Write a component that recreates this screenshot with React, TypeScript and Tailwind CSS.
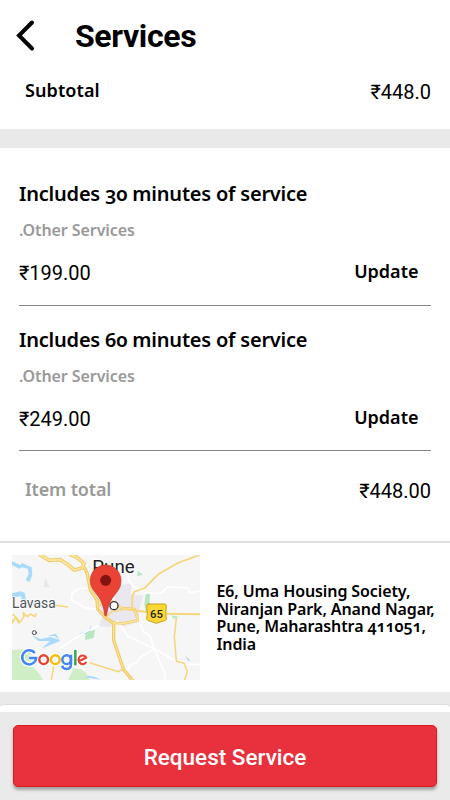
import React from 'react';

interface ServiceItem {
  id: number;
  title: string;
  category: string;
  price: string;
}

const ITEMS: ServiceItem[] = [
  { id: 1, title: 'Includes 30 minutes of service', category: '.Other Services', price: '₹199.00' },
  { id: 2, title: 'Includes 60 minutes of service', category: '.Other Services', price: '₹249.00' },
];

const ADDRESS = ['E6, Uma Housing Society,', 'Niranjan Park, Anand Nagar,', 'Pune, Maharashtra 411051,', 'India'];

const LocationMap: React.FC = () => (
  <svg
    viewBox="37 45 564 375"
    className="h-[125px] w-[188px] shrink-0 [font-feature-settings:normal]"
    fill="none"
    strokeLinecap="round"
    strokeLinejoin="round"
  >
    <rect x="37" y="45" width="564" height="375" fill="#f6f6f6" />

    {/* parks */}
    <g fill="#cfeec5">
      <path d="M37 330 L75 328 L105 350 L95 375 L118 400 L130 420 L37 420Z" />
      <path d="M205 420 L222 385 L245 388 L262 402 L270 420Z" />
      <path d="M258 277 L286 270 L282 293 L256 301Z" fill="#b9e6c1" />
      <path d="M438 163 L451 158 L450 190 L462 210 L440 218 L434 192Z" fill="#b9e6c1" />
      <path d="M414 92 L430 104 L413 109Z" fill="#b9e6c1" />
      <path d="M515 226 L540 231 L522 236Z" fill="#b9e6c1" />
    </g>
    <path d="M137 112 L150 143 L132 140Z" fill="#e8e8e8" />

    {/* city area */}
    <path d="M345 137 L397 130 L393 162 L430 168 L420 205 L416 245 L372 260 L355 245 L330 262 L297 258 L308 230 L300 190 L345 188Z" fill="#ebe7ef" />

    {/* water */}
    <g fill="#a9dafb">
      <path d="M37 64 L62 75 L67 69 L96 82 L98 103 L90 126 L78 121 L87 101 L84 86 L68 82 L58 86 L37 75Z" />
      <path d="M37 160 L62 154 L75 158 L79 179 L92 186 L104 181 L107 196 L91 190 L68 185 L64 168 L37 174Z" />
      <path d="M98 287 L123 297 L153 291 L180 300 L165 288 L143 288 L169 281 L181 303 L152 315 L127 325 L151 303 L116 303Z" />
      <path d="M237 283 L266 270 L275 256 L272 272 L257 282Z" />
      <path d="M254 413 L268 407 L287 411 L304 419 L270 414Z" />
      <path d="M556 348 L571 359 L567 364Z" />
    </g>

    {/* minor roads */}
    <g stroke="#ffffff" strokeWidth="5">
      <path d="M216 180 Q212 153 231 151 Q254 137 270 151 L282 170" />
      <path d="M216 180 Q235 190 254 203 L300 210" />
      <path d="M297 257 L260 274 L216 302 L180 325" />
      <path d="M402 140 Q444 168 487 158 L504 140 L565 144 L570 158 L600 153" />
      <path d="M402 142 L385 118 L390 80" />
      <path d="M353 243 L384 288 L464 326 L530 364 L556 374 L600 373" />
      <path d="M416 240 L432 276 L449 286 L464 326 L497 405 L494 420" />
      <path d="M464 326 L424 350 L410 369 L391 375 L378 400" />
    </g>

    {/* highways, casing then fill */}
    <g stroke="#efcb6a" strokeWidth="8">
      <path d="M122 45 L148 61 L181 59 L202 72 L224 90 L248 84 L253 70 L230 51 L214 45" strokeWidth="11" />
      <path d="M252 80 L262 98 L272 150 L292 180 L294 207 L318 234 L342 249 L342 300 L357 345 L372 389 L398 420" strokeWidth="10" />
      <path d="M342 249 L372 250 L415 241 L405 207 L365 204 L340 185" />
    </g>
    <g stroke="#ffe8a2" strokeWidth="3.5">
      <path d="M122 45 L148 61 L181 59 L202 72 L224 90 L248 84 L253 70 L230 51 L214 45" strokeWidth="5" />
      <path d="M252 80 L262 98 L272 150 L292 180 L294 207 L318 234 L342 249 L342 300 L357 345 L372 389 L398 420" strokeWidth="3" />
      <path d="M342 249 L372 250 L415 241 L405 207 L365 204 L340 185" />
    </g>
    <g stroke="#f5d67a" strokeWidth="4.5">
      <path d="M292 206 L306 190 L320 188 M292 180 L310 190 M318 234 L335 215 L375 208" />
      <path d="M380 208 L442 216 M500 221 L600 223" strokeWidth="6" />
      <path d="M397 207 L398 170 L404 155 L434 145 L478 101 L536 68 L600 45" strokeWidth="5" />
      <path d="M530 235 L524 290 L530 364 L553 370 L563 394 L555 420" />
      <path d="M272 369 L357 395 L372 384" />
      <path d="M162 378 L155 420" />
      <path d="M167 196 L203 201" />
      <path d="M37 245 L50 232 L40 224 M50 232 L61 247 L73 230 L70 218 L83 230 L92 222 L106 230 L109 221" />
      <path d="M37 250 L48 232 L58 249" />
    </g>

    {/* place labels */}
    <g fontFamily="Roboto, sans-serif" stroke="#ffffff" paintOrder="stroke">
      <text x="278" y="100" fontSize="56" fill="#222222" strokeWidth="5" textLength="127" lengthAdjust="spacingAndGlyphs">Pune</text>
      <text x="37" y="203" fontSize="42" fill="#4f5358" strokeWidth="5" textLength="131" lengthAdjust="spacingAndGlyphs">Lavasa</text>
    </g>
    <circle cx="104" cy="278" r="6" fill="#ffffff" stroke="#444444" strokeWidth="3" />
    <circle cx="343" cy="197" r="12" fill="#ffffff" stroke="#333333" strokeWidth="4" />

    {/* route shield */}
    <path d="M447 192 H494 Q500 192 500 198 L498 221 L500 238 Q498 242 488 244 L470 250 L453 244 Q442 242 441 238 L443 221 L441 198 Q441 192 447 192Z" fill="#fdd835" stroke="#c89f1c" strokeWidth="3" />
    <text x="470.500" y="234" fontFamily="Roboto, sans-serif" fontSize="34" fontWeight="500" fill="#222222" textAnchor="middle">65</text>

    {/* pin */}
    <path d="M318 75 C292 75 272 96 272 121 C272 151 294 160 305 185 C311 199 314 213 315 226 Q318 231 321 226 C323 207 327 191 338 174 C350 157 364 147 364 121 C364 96 344 75 318 75Z" fill="#ea4335" stroke="#c5392c" strokeWidth="2" />
    <circle cx="318" cy="121" r="16.500" fill="#811411" />

    {/* Google wordmark */}
    <g strokeLinecap="butt">
      {['halo', 'color'].map((layer) => {
        const halo = layer === 'halo';
        const c = (value: string) => (halo ? '#ffffff' : value);
        const w = halo ? 15 : 7.5;
        return (
          <g key={layer} strokeWidth={w}>
            <path d="M105 339 A21 21 0 1 0 109.500 354 H88" stroke={c('#4285f4')} strokeLinejoin="miter" />
            <circle cx="132" cy="359" r="13" stroke={c('#ea4335')} />
            <circle cx="167" cy="359" r="13" stroke={c('#fbbc05')} />
            <circle cx="201" cy="359" r="13" stroke={c('#4285f4')} />
            <path d="M214 344 V372 Q214 387 201 387 Q191 387 187 377" stroke={c('#4285f4')} />
            <path d="M227 330 V376" stroke={c('#34a853')} />
            <path d="M238 363 L260 353 A12.500 13 0 1 0 260 366" stroke={c('#ea4335')} strokeWidth={halo ? 14 : 6.5} />
          </g>
        );
      })}
    </g>
  </svg>
);

const Price: React.FC<{ value: string }> = ({ value }) => (
  <span className="font-[Roboto] text-[20px] leading-[28px] [font-feature-settings:normal]">{value}</span>
);

const ServiceRow: React.FC<{ item: ServiceItem }> = ({ item }) => (
  <div className="mx-[19px] h-[145.5px] border-b border-[#858585] pt-[20px]">
    <h2 className="h-[38px] whitespace-nowrap text-[20px] leading-[28px] font-semibold tracking-[-0.21px]">{item.title}</h2>
    <p className="h-[41px] text-[16px] leading-[24px] font-semibold tracking-[-0.08px] text-[#999999]">{item.category}</p>
    <div className="flex h-[28px] items-start justify-between">
      <Price value={item.price} />
      <button className="mr-[12.5px] text-[18px] leading-[25px] font-semibold">Update</button>
    </div>
  </div>
);

const App: React.FC = () => {
  return (
    <div className="flex h-[800px] w-[450px] flex-col overflow-hidden bg-white font-['Noto_Sans',sans-serif] text-black [font-feature-settings:'onum']">
      <header className="flex h-[72px] shrink-0 items-center">
        <button aria-label="Back" className="ml-[15px]">
          <svg width="22" height="34" viewBox="0 0 22 34" fill="none" stroke="#000000" strokeWidth="4" strokeLinecap="round">
            <path d="M17 3.500 L4 16.500 L17 29.500" strokeLinejoin="miter" />
          </svg>
        </button>
        <h1 className="ml-[38px] font-[Roboto] text-[32px] leading-[40px] font-bold tracking-[-0.35px]">Services</h1>
      </header>

      <div className="flex h-[57px] shrink-0 items-end justify-between pr-[19px] pb-[23px] pl-[25px]">
        <span className="mb-[3px] text-[18px] leading-[26px] font-semibold tracking-[0.1px]">Subtotal</span>
        <Price value="₹448.0" />
      </div>

      <div className="h-[19px] shrink-0 bg-[#e9e9e9]" />

      <main className="h-[393px] shrink-0 pt-[12px]">
        {ITEMS.map((item) => (
          <ServiceRow key={item.id} item={item} />
        ))}
        <div className="flex items-end justify-between pt-[25px] pr-[19px] pl-[25px]">
          <span className="mb-[3px] text-[18px] leading-[26px] font-semibold tracking-[-0.15px] text-[#999999]">Item total</span>
          <Price value="₹448.00" />
        </div>
      </main>

      <section className="flex h-[151px] shrink-0 items-start border-t-2 border-[#e1dfdf] pt-[12px] pl-[12px]">
        <LocationMap />
        <address className="mt-[28px] ml-[16.5px] text-[16px] leading-[17.5px] font-semibold tracking-[-0.1px] whitespace-nowrap not-italic">
          {ADDRESS.map((line) => (
            <div key={line}>{line}</div>
          ))}
        </address>
      </section>

      <div className="h-[20px] shrink-0 bg-[#eaeaea] pt-[12px]">
        <div className="h-[8px] rounded-t-[4px] border-t border-[#dedede] bg-white" />
      </div>

      <footer className="flex-1 bg-[#eaeaea] px-[13px] pt-[13px]">
        <button className="h-[62px] w-full rounded-[5px] border border-[#df1721] bg-[#e9303d] pt-[4px] font-[Roboto] text-[22.5px] font-medium text-white shadow-[0_3px_3px_rgba(0,0,0,0.3)]">
          Request Service
        </button>
      </footer>
    </div>
  );
};

export default App;
